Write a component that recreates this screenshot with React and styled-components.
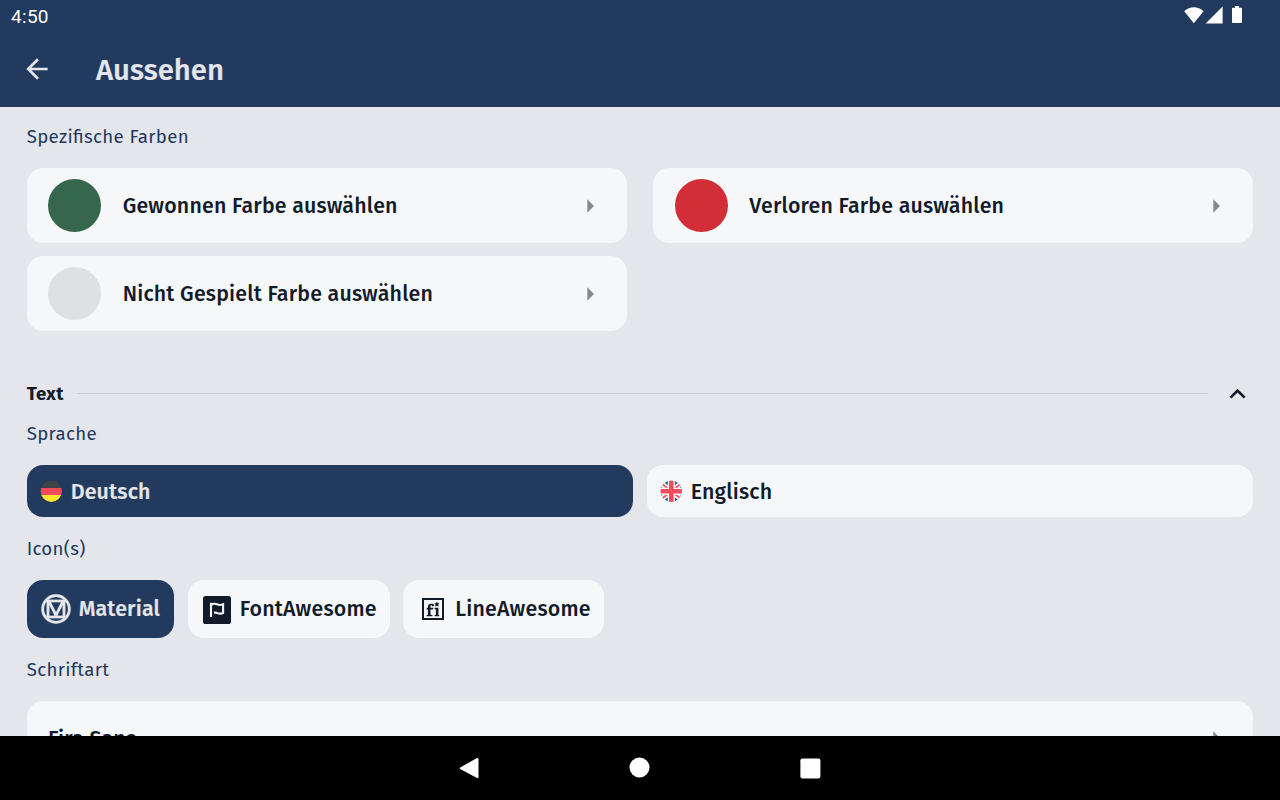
import React from "react";
import styled, { createGlobalStyle } from "styled-components";
import { MdArrowBack, MdArrowRight, MdKeyboardArrowUp } from "react-icons/md";
import { LiaFonticons } from "react-icons/lia";

const navy = "#223a5e";
const ink = "#111b2a";
const surface = "#f6f7f9";
const base = "#e5e6eb";

const GlobalStyle = createGlobalStyle`
  * { box-sizing: border-box; }
  body { margin: 0; overflow: hidden; font-family: "Fira Sans", "Noto Sans", sans-serif; }
  svg { display: block; flex: none; }
`;

const Screen = styled.div`
  width: 1280px;
  height: 800px;
  display: flex;
  flex-direction: column;
  background: ${base};
  color: ${ink};
`;

const StatusBar = styled.div`
  flex: none;
  height: 32px;
  padding: 0 37px 0 11px;
  display: flex;
  align-items: center;
  justify-content: space-between;
  background: ${navy};
  color: #fff;
`;

const Clock = styled.span`
  padding-top: 2px;
  font-family: Roboto, sans-serif;
  font-size: 19px;
  line-height: 30px;
  letter-spacing: 0.3px;
`;

const AppBar = styled.header`
  flex: none;
  height: 74.67px;
  padding: 0 21px;
  display: flex;
  align-items: center;
  gap: 43px;
  background: ${navy};
  color: ${base};
`;

const Title = styled.h1`
  margin: 3px 0 0;
  font-size: 29.33px;
  line-height: 40px;
  font-weight: 500;
  -webkit-text-stroke: 0.2px currentColor;
`;

const Content = styled.main`
  flex: 1;
  min-height: 0;
  overflow: hidden;
  padding: 0 26.67px;
`;

const Label = styled.h2`
  margin: ${(p) => p.$top ?? 18.8}px 0 ${(p) => (p.$top ? 18.3 : 17.8)}px;
  height: 26px;
  color: ${navy};
  font-size: 18.67px;
  line-height: 26px;
  font-weight: 400;
  white-space: nowrap;
  letter-spacing: 0.33px;
  font-feature-settings: "liga" 1;
`;

const ColorGrid = styled.div`
  display: grid;
  grid-template-columns: 1fr 1fr;
  gap: 13.33px 26.67px;
`;

const Card = styled.div`
  height: 74.67px;
  padding: 0 21.1px 0 21.33px;
  display: flex;
  align-items: center;
  border-radius: 16px;
  background: ${surface};
`;

const Swatch = styled.span`
  width: 53.33px;
  height: 53.33px;
  margin-right: 21.33px;
  border-radius: 50%;
  background: ${(p) => p.$color};
`;

const Text = styled.span`
  padding-top: ${(p) => p.$drop ?? 0}px;
  font-size: 21.33px;
  line-height: 28px;
  font-weight: 500;
  white-space: nowrap;
  letter-spacing: 0.2px;
`;

const Caret = styled(MdArrowRight)`
  margin-left: auto;
  color: #888a8a;
`;

const SectionHead = styled.div`
  height: 32px;
  margin-top: 46.7px;
  display: flex;
  align-items: center;
`;

const SectionTitle = styled.span`
  width: 50.6px;
  font-size: 18.67px;
  font-weight: 700;
  line-height: 26px;
  letter-spacing: 0.3px;
`;

const Rule = styled.span`
  flex: 1;
  height: 1px;
  margin-right: 13.3px;
  background: #cbccd2;
`;

const Chevron = () => (
  <svg width="32" height="32" viewBox="-0.4 0 24 24" fill="currentColor">
    <path d="M7.41 15.41 12 10.83l4.59 4.58L18 14l-6-6-6 6z" />
  </svg>
);

const Languages = styled.div`
  display: grid;
  grid-template-columns: 1fr 1fr;
  gap: 13.33px;
`;

const IconSets = styled.div`
  display: flex;
  gap: 13.33px;
`;

const Option = styled.button`
  width: ${(p) => (p.$width ? `${p.$width}px` : "auto")};
  height: ${(p) => p.$height}px;
  padding: 0 0 0 13.33px;
  display: flex;
  align-items: center;
  gap: ${(p) => (p.$width ? 6.67 : 8.7)}px;
  border: 0;
  border-radius: 16px;
  font-family: inherit;
  background: ${(p) => (p.$active ? navy : surface)};
  color: ${(p) => (p.$active ? base : ink)};
  -webkit-text-stroke: ${(p) => (p.$active ? "0.2px currentColor" : "0")};
`;

const NavBar = styled.nav`
  flex: none;
  height: 64px;
  display: flex;
  justify-content: center;
  align-items: center;
  background: #000;
`;

const StatusIcons = () => (
  <svg width="60" height="20" viewBox="0 0 60 20" fill="#fff">
    <path d="M1.2 5.2C6.8-.2 15-.2 20.6 5.2L10.8 17.2Z" />
    <path d="M22.6 17.5H39.6V.5Z" />
    <path d="M49.9 1.7h2.1V0h4v1.7h2.1q.9 0 .9.9V16.1q0 .9-.9.9h-8.2q-.9 0-.9-.9V2.6q0-.9.9-.9Z" />
  </svg>
);

const GermanFlag = () => (
  <svg width="22" height="22" viewBox="0 0 22 22">
    <clipPath id="de"><circle cx="11.3" cy="11.3" r="10.6" /></clipPath>
    <g clipPath="url(#de)">
      <path fill="#3e4347" d="M0 0h22v8H0z" />
      <path fill="#f14b5c" d="M0 8h22v7H0z" />
      <path fill="#ffe62e" d="M0 15h22v7H0z" />
    </g>
  </svg>
);

const BritishFlag = () => (
  <svg width="22" height="22" viewBox="0.2 0.2 22 22">
    <clipPath id="gb"><circle cx="11.5" cy="11.5" r="10.6" /></clipPath>
    <g clipPath="url(#gb)">
      <path fill="#2a5f9e" d="M0 0h23v23H0z" />
      <path stroke="#fff" strokeWidth="5" d="M0 2.5 23 20.5M23 2.5 0 20.5" />
      <path stroke="#f14b5c" strokeWidth="1.8" d="M0 2.5 23 20.5M23 2.5 0 20.5" />
      <path stroke="#fff" strokeWidth="7" d="M11.5 0v23M0 11.5h23" />
      <path stroke="#f14b5c" strokeWidth="4.6" d="M11.5 0v23M0 11.5h23" />
    </g>
  </svg>
);

const MaterialIcon = () => (
  <svg width="32" height="32" viewBox="0 0 24 24" fill="currentColor" stroke="currentColor" strokeWidth="0.15">
    <path d="M21,12C21,9.97 20.33,8.09 19,6.38V17.63C20.33,15.97 21,14.09 21,12M17.63,19H6.38C7.06,19.55 7.95,20 9.05,20.41C10.14,20.8 11.13,21 12,21C12.88,21 13.86,20.8 14.95,20.41C16.05,20 16.94,19.55 17.63,19M11,17L7,9V17H11M17,9L13,17H17V9M12,14.53L15.75,7H8.25L12,14.53M17.63,5C15.97,3.67 14.09,3 12,3C9.91,3 8.03,3.67 6.38,5H17.63M5,17.63V6.38C3.67,8.09 3,9.97 3,12C3,14.09 3.67,15.97 5,17.63M23,12C23,15.03 21.94,17.63 19.78,19.78C17.63,21.94 15.03,23 12,23C8.97,23 6.38,21.94 4.22,19.78C2.06,17.63 1,15.03 1,12C1,8.97 2.06,6.38 4.22,4.22C6.38,2.06 8.97,1 12,1C15.03,1 17.63,2.06 19.78,4.22C21.94,6.38 23,8.97 23,12Z" />
  </svg>
);

const FlagSquareIcon = () => (
  <svg width="32" height="32" viewBox="0 0 32 32" fill="none">
    <rect x="2" y="3" width="28" height="28" rx="2.6" fill={ink} />
    <path
      stroke={surface}
      strokeWidth="2.1"
      d="M10 9.8V24M10 11.8Q13 9.9 16 11.3Q19.2 12.6 22.1 11.3V20Q19.4 21.3 16.5 20.1Q14.8 19.3 13 19.8"
    />
  </svg>
);

const NavIcons = () => (
  <svg width="362" height="24" viewBox="0 0 362 24" fill="#fff">
    <path d="M1.2 11.6 18 2q1.5-.5 1.5 1v18q0 1.5-1.5 1L1.2 13.1Q.3 12.3 1.2 11.6Z" />
    <circle cx="180.5" cy="11.5" r="10" />
    <rect x="341.4" y="2.4" width="20" height="20" rx="1.8" />
  </svg>
);

const colors = [
  { name: "Gewonnen Farbe auswählen", color: "#36664c" },
  { name: "Verloren Farbe auswählen", color: "#d12e37" },
  { name: "Nicht Gespielt Farbe auswählen", color: "#dfe0e2" },
];

export default function App() {
  return (
    <Screen>
      <GlobalStyle />
      <StatusBar>
        <Clock>4:50</Clock>
        <StatusIcons />
      </StatusBar>
      <AppBar>
        <MdArrowBack size={32} />
        <Title>Aussehen</Title>
      </AppBar>
      <Content>
        <Label $top={17.3}>Spezifische Farben</Label>
        <ColorGrid>
          {colors.map((c) => (
            <Card key={c.name}>
              <Swatch $color={c.color} />
              <Text>{c.name}</Text>
              <Caret size={32} />
            </Card>
          ))}
        </ColorGrid>
        <SectionHead>
          <SectionTitle>Text</SectionTitle>
          <Rule />
          <Chevron />
        </SectionHead>
        <Label $top={11.3}>Sprache</Label>
        <Languages>
          <Option $height={52} $active>
            <GermanFlag />
            <Text $drop={1.5}>Deutsch</Text>
          </Option>
          <Option $height={52}>
            <BritishFlag />
            <Text $drop={1.5}>Englisch</Text>
          </Option>
        </Languages>
        <Label>Icon(s)</Label>
        <IconSets>
          <Option $height={58.3} $width={147.7} $active>
            <MaterialIcon />
            <Text>Material</Text>
          </Option>
          <Option $height={58.3} $width={202.3}>
            <FlagSquareIcon />
            <Text>FontAwesome</Text>
          </Option>
          <Option $height={58.3} $width={201}>
            <LiaFonticons size={32} />
            <Text>LineAwesome</Text>
          </Option>
        </IconSets>
        <Label>Schriftart</Label>
        <Card>
          <Text $drop={1.5}>Fira Sans</Text>
          <Caret size={32} />
        </Card>
      </Content>
      <NavBar>
        <NavIcons />
      </NavBar>
    </Screen>
  );
}
